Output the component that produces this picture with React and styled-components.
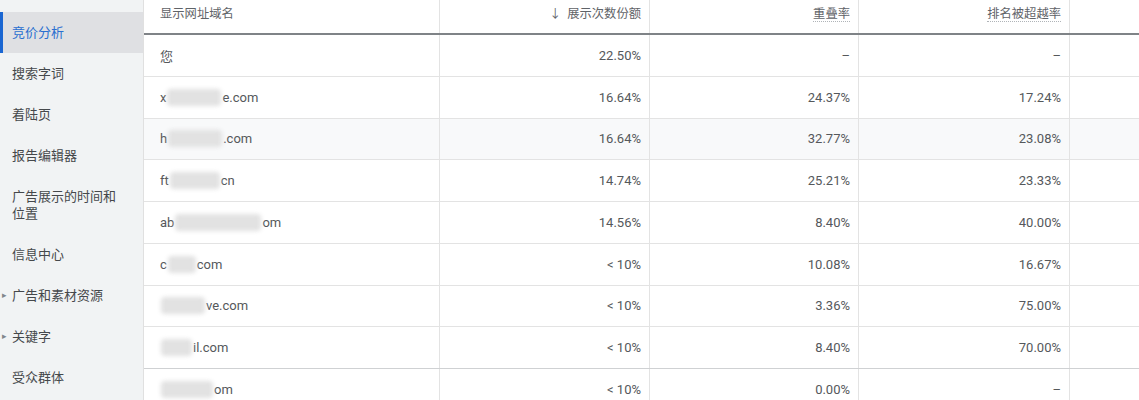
import React from 'react'
import styled, {createGlobalStyle, css} from 'styled-components'

const GlobalStyle = createGlobalStyle`
  html, body {
    margin: 0;
    padding: 0;
    height: 400px;
    overflow: hidden;
    background: #fff;
  }
  body {
    font-family: Roboto, "Noto Sans CJK SC", "Noto Sans", sans-serif;
    -webkit-font-smoothing: antialiased;
  }
`

const navItems = [
  {label: '竞价分析', active: true},
  {label: '搜索字词'},
  {label: '着陆页'},
  {label: '报告编辑器'},
  {label: '广告展示的时间和位置'},
  {label: '信息中心'},
  {label: '广告和素材资源', arrow: true},
  {label: '关键字', arrow: true},
  {label: '受众群体'},
]

const rows = [
  {pre: '您', blur: 0, post: '', share: '22.50%', overlap: '–', rank: '–'},
  {pre: 'x', blur: 54, post: 'e.com', share: '16.64%', overlap: '24.37%', rank: '17.24%'},
  {pre: 'h', blur: 54, post: '.com', share: '16.64%', overlap: '32.77%', rank: '23.08%', hover: true},
  {pre: 'ft', blur: 50, post: 'cn', share: '14.74%', overlap: '25.21%', rank: '23.33%'},
  {pre: 'ab', blur: 86, post: 'om', share: '14.56%', overlap: '8.40%', rank: '40.00%'},
  {pre: 'c', blur: 28, post: 'com', share: '< 10%', overlap: '10.08%', rank: '16.67%'},
  {pre: '', blur: 44, post: 've.com', share: '< 10%', overlap: '3.36%', rank: '75.00%'},
  {pre: '', blur: 31, post: 'il.com', share: '< 10%', overlap: '8.40%', rank: '70.00%', strong: true},
  {pre: '', blur: 52, post: 'om', share: '< 10%', overlap: '0.00%', rank: '–'},
]

export default function App() {
  return (
    <>
      <GlobalStyle />
      <Page>
        <Sidebar>
          {navItems.map(item => (
            <NavItem key={item.label} $active={item.active}>
              {item.arrow && <Caret>▸</Caret>}
              <NavLabel>{item.label}</NavLabel>
            </NavItem>
          ))}
        </Sidebar>
        <Table>
          <HeadRow>
            <HeadCell>显示网址域名</HeadCell>
            <HeadCell $right>
              <SortArrow>↓</SortArrow>展示次数份额
            </HeadCell>
            <HeadCell $right>
              <Dotted>重叠率</Dotted>
            </HeadCell>
            <HeadCell $right>
              <Dotted>排名被超越率</Dotted>
            </HeadCell>
            <HeadCell $last />
          </HeadRow>
          {rows.map((r, i) => (
            <Row key={i} $hover={r.hover} $strong={r.strong}>
              <Cell>
                {r.pre}
                {r.blur > 0 && <Blur style={{width: r.blur}} />}
                {r.post}
              </Cell>
              <Cell $right>{r.share}</Cell>
              <Cell $right>{r.overlap}</Cell>
              <Cell $right>{r.rank}</Cell>
              <Cell $last />
            </Row>
          ))}
        </Table>
      </Page>
    </>
  )
}

//styled-components

const cols = '296px 210px 209px 211px 1fr'

const Page = styled.div`
  display: flex;
  width: 1139px;
  height: 400px;
  overflow: hidden;
`

const Sidebar = styled.nav`
  box-sizing: border-box;
  width: 143px;
  flex-shrink: 0;
  padding-top: 11.5px;
  background: #f1f3f4;
  display: flex;
  flex-direction: column;
`

const NavItem = styled.div`
  position: relative;
  flex-shrink: 0;
  box-sizing: border-box;
  min-height: 41px;
  padding: 12px 22px 12px 12px;
  display: flex;
  align-items: center;
  font-size: 13px;
  line-height: 17px;
  color: #45484b;
  ${p =>
    p.$active &&
    css`
      background: #dfe0e3;
      color: #2a6fd0;
      &::before {
        content: '';
        position: absolute;
        left: 0;
        top: 0;
        bottom: 0;
        width: 3px;
        background: #1a66d2;
      }
    `}
`

const NavLabel = styled.span``

const Caret = styled.span`
  position: absolute;
  left: 2px;
  font-size: 9px;
  color: #80868b;
`

const Table = styled.div`
  flex: 1;
  border-left: 1px solid #e0e0e0;
  background: #fff;
  display: flex;
  flex-direction: column;
`

const HeadRow = styled.div`
  display: grid;
  grid-template-columns: ${cols};
  height: 35px;
  flex-shrink: 0;
  box-sizing: border-box;
  border-bottom: 2px solid #7f8387;
`

const HeadCell = styled.div`
  box-sizing: border-box;
  padding: 6px ${p => (p.$right ? '8px' : '0')} 0 ${p => (p.$right ? '0' : '16px')};
  font-size: 12.3px;
  line-height: 16px;
  color: #5f6368;
  text-align: ${p => (p.$right ? 'right' : 'left')};
  border-right: ${p => (p.$last ? 'none' : '1px solid #e3e3e3')};
`

const SortArrow = styled.span`
  margin-right: 6px;
  font-size: 12px;
  color: #5f6368;
`

const Dotted = styled.span`
  border-bottom: 1px dotted #b0b4b8;
`

const Row = styled.div`
  display: grid;
  grid-template-columns: ${cols};
  height: 41.75px;
  flex-shrink: 0;
  box-sizing: border-box;
  border-bottom: 1px solid ${p => (p.$strong ? '#cfd1d3' : '#e3e3e3')};
  background: ${p => (p.$hover ? '#f8f9fa' : '#fff')};
`

const Cell = styled.div`
  box-sizing: border-box;
  display: flex;
  align-items: center;
  justify-content: ${p => (p.$right ? 'flex-end' : 'flex-start')};
  padding: 0 ${p => (p.$right ? '8px' : '0')} 0 ${p => (p.$right ? '0' : '16px')};
  font-size: 13px;
  color: #55585b;
  white-space: nowrap;
  border-right: ${p => (p.$last ? 'none' : '1px solid #e3e3e3')};
`

const Blur = styled.span`
  display: inline-block;
  height: 17px;
  margin: 0 1px;
  background: #e2e2e2;
  border-radius: 4px;
  filter: blur(2px);
`
